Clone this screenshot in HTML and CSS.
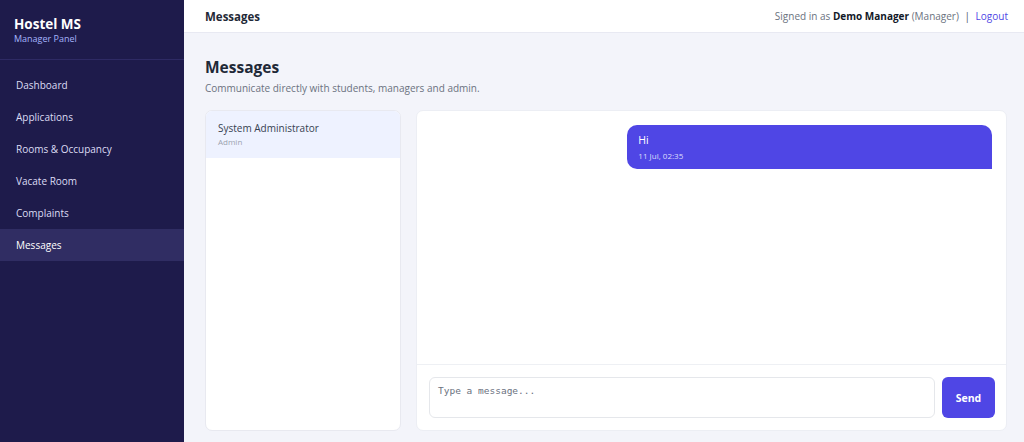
FILE: index.html
```html
<!DOCTYPE html>
<html lang="en">
    <head>
        <meta name="viewport" content="width=device-width, initial-scale=1">
        <link rel="stylesheet" href="styles.css">
        <title>Messages - Hostel MS</title>
    </head>
    <body>
        <aside class="sidebar">
            <div class="brand">
                <div class="brand-name">Hostel MS</div>
                <div class="brand-sub">Manager Panel</div>
            </div>
            <nav class="nav">
                <a href="#">Dashboard</a>
                <a href="#">Applications</a>
                <a href="#">Rooms &amp; Occupancy</a>
                <a href="#">Vacate Room</a>
                <a href="#">Complaints</a>
                <a href="#" class="active">Messages</a>
            </nav>
        </aside>
        <div class="main">
            <header class="topbar">
                <div class="topbar-title">Messages</div>
                <div class="topbar-user">
                    Signed in as <b>Demo Manager</b> (Manager) <span class="sep">|</span> <a href="#">Logout</a>
                </div>
            </header>
            <section class="content">
                <h1>Messages</h1>
                <p class="lead">Communicate directly with students, managers and admin.</p>
                <div class="chat">
                    <div class="contacts">
                        <div class="contact selected">
                            <div class="contact-name">System Administrator</div>
                            <div class="contact-role">Admin</div>
                        </div>
                    </div>
                    <div class="thread">
                        <div class="messages">
                            <div class="bubble mine">
                                <div class="bubble-text">Hi</div>
                                <div class="bubble-time">11 Jul, 02:35</div>
                            </div>
                        </div>
                        <form class="composer">
                            <textarea placeholder="Type a message..."></textarea>
                            <button type="submit">Send</button>
                        </form>
                    </div>
                </div>
            </section>
        </div>
    </body>
</html>
```

FILE: styles.css
```css
* {
    box-sizing: border-box;
}

body {
    margin: 0;
    display: flex;
    height: 442px;
    overflow: hidden;
    font-family: "Open Sans", "Noto Sans", Arial, sans-serif;
    font-size: 10px;
    color: #1f2937;
    background: #f3f4fa;
}

.sidebar {
    width: 184px;
    flex-shrink: 0;
    background: #1e1b4b;
    color: #fff;
}

.brand {
    padding: 15px 14px 14px;
    border-bottom: 1px solid #2e2a64;
}

.brand-name {
    font-size: 13.5px;
    font-weight: 700;
    line-height: 18px;
}

.brand-sub {
    font-size: 9px;
    color: #a5b4fc;
    line-height: 12px;
}

.nav {
    padding-top: 9px;
}

.nav a {
    display: block;
    padding: 0 16px;
    height: 32px;
    line-height: 32px;
    color: #dcdcf4;
    text-decoration: none;
    font-size: 10px;
}

.nav a.active {
    background: #302d63;
    color: #fff;
}

.main {
    flex: 1;
    display: flex;
    flex-direction: column;
    min-width: 0;
}

.topbar {
    height: 33px;
    background: #fff;
    border-bottom: 1px solid #e8e9f2;
    display: flex;
    align-items: center;
    justify-content: space-between;
    padding: 0 16px 0 21px;
}

.topbar-title {
    font-weight: 700;
    font-size: 11.5px;
    color: #1f2937;
}

.topbar-user {
    font-size: 10px;
    color: #6b7280;
}

.topbar-user b {
    color: #111827;
}

.topbar-user .sep {
    margin: 0 3px;
    color: #4b5563;
}

.topbar-user a {
    color: #4f46e5;
    text-decoration: none;
}

.content {
    flex: 1;
    padding: 23px 17px 11px 21px;
    display: flex;
    flex-direction: column;
    min-height: 0;
}

h1 {
    margin: 0;
    font-size: 15.5px;
    line-height: 22px;
    font-weight: 700;
    color: #1f2937;
}

.lead {
    margin: 3px 0 15px;
    font-size: 10px;
    color: #6b7280;
}

.chat {
    flex: 1;
    display: flex;
    gap: 15px;
    min-height: 0;
}

.contacts {
    width: 196px;
    background: #fff;
    border: 1px solid #e8e9f0;
    border-radius: 7px;
    overflow: hidden;
}

.contact {
    height: 47px;
    padding: 10px 12px;
}

.contact.selected {
    background: #eef2ff;
}

.contact-name {
    font-size: 10px;
    color: #374151;
    line-height: 14px;
}

.contact-role {
    font-size: 8px;
    color: #9ca3af;
    line-height: 14px;
}

.thread {
    flex: 1;
    background: #fff;
    border: 1px solid #eceef4;
    border-radius: 7px;
    display: flex;
    flex-direction: column;
}

.messages {
    flex: 1;
    padding: 14px 14px;
    display: flex;
    flex-direction: column;
    align-items: flex-end;
}

.bubble {
    width: 65%;
    background: #4f46e5;
    color: #fff;
    border-radius: 10px 10px 0 10px;
    padding: 8px 11px 7px;
}

.bubble-text {
    font-size: 10.5px;
    line-height: 15px;
}

.bubble-time {
    margin-top: 2px;
    font-size: 8px;
    color: #dcdcfb;
    line-height: 12px;
}

.composer {
    border-top: 1px solid #eef0f4;
    padding: 12px 11px 12px 12px;
    display: flex;
    gap: 7px;
}

.composer textarea {
    flex: 1;
    height: 41px;
    border: 1px solid #e5e7eb;
    border-radius: 6px;
    padding: 7px 8px;
    resize: none;
    font-family: "DejaVu Sans Mono", "Liberation Mono", monospace;
    font-size: 9.5px;
    outline: 0;
}

.composer textarea::placeholder {
    color: #6b7280;
}

.composer button {
    width: 53px;
    height: 41px;
    border: 0;
    border-radius: 6px;
    background: #4f46e5;
    color: #fff;
    font-family: inherit;
    font-weight: 700;
    font-size: 10.5px;
    cursor: pointer;
}
```
